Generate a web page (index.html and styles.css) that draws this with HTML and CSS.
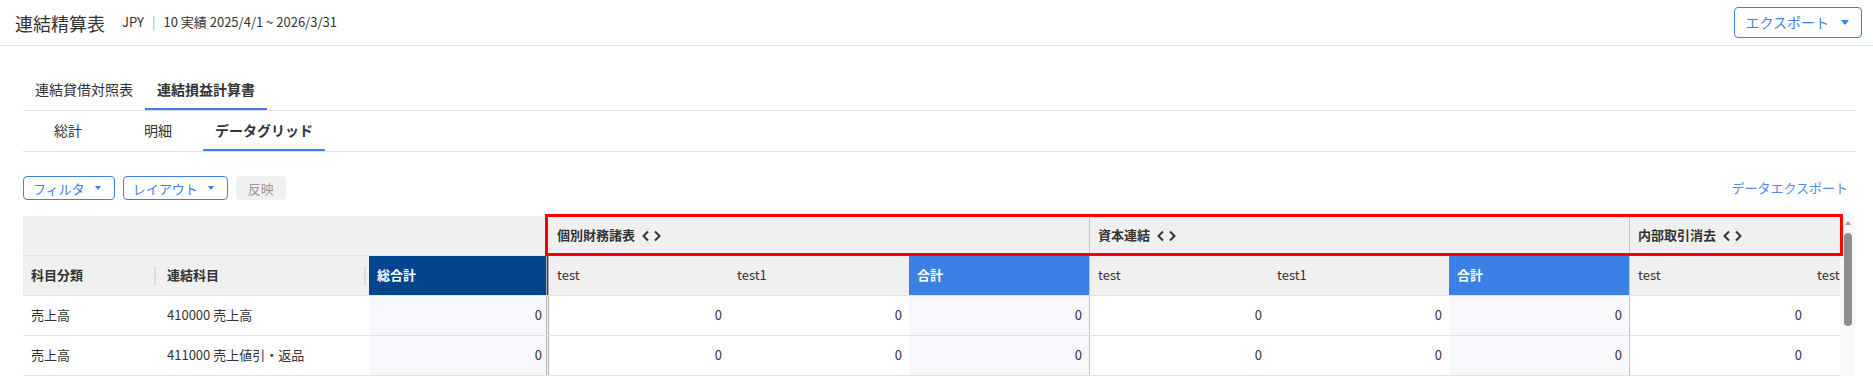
FILE: index.html
```html
<!DOCTYPE html>
<html lang="ja">
<head>
<meta charset="utf-8"/>
<title>連結精算表</title>
<meta name="viewport" content="width=device-width"/>
<link rel="stylesheet" href="styles.css">
</head>
<body>
<header class="page-header">
    <div class="page-title">
        <h1>連結精算表</h1>
        <span class="meta">JPY<span class="sep">|</span>10 実績 2025/4/1 ~ 2026/3/31</span>
    </div>
    <button class="btn btn-export" type="button">エクスポート<i class="caret caret-lg"></i></button>
</header>

<div class="content">
    <!-- statement tabs -->
    <nav class="tabs">
        <a class="tab">連結貸借対照表</a>
        <a class="tab active">連結損益計算書</a>
    </nav>
    <nav class="tabs sub">
        <a class="tab">総計</a>
        <a class="tab">明細</a>
        <a class="tab active">データグリッド</a>
    </nav>

    <div class="toolbar">
        <div class="toolbar-l">
            <button class="btn" type="button">フィルタ<i class="caret"></i></button>
            <button class="btn" type="button">レイアウト<i class="caret"></i></button>
            <button class="btn btn-disabled" type="button">反映</button>
        </div>
        <a class="link-btn">データエクスポート</a>
    </div>

    <!-- data grid -->
    <div class="grid">
        <div class="grid-view">
            <div class="g-row g-head g-group">
                <div class="cell pin-span"></div>
                <div class="cell grp-title span3">個別財務諸表<svg class="arrows" width="22" height="12" viewBox="0 0 22 12"><path d="M7 1.5L2.5 6L7 10.5M14 1.5L18.5 6L14 10.5" fill="none" stroke="#333" stroke-width="2"/></svg></div>
                <div class="cell grp-title span3 grp">資本連結<svg class="arrows" width="22" height="12" viewBox="0 0 22 12"><path d="M7 1.5L2.5 6L7 10.5M14 1.5L18.5 6L14 10.5" fill="none" stroke="#333" stroke-width="2"/></svg></div>
                <div class="cell grp-title span3 grp">内部取引消去<svg class="arrows" width="22" height="12" viewBox="0 0 22 12"><path d="M7 1.5L2.5 6L7 10.5M14 1.5L18.5 6L14 10.5" fill="none" stroke="#333" stroke-width="2"/></svg></div>
            </div>
            <div class="g-row g-head">
                <div class="cell bold resize">科目分類</div>
                <div class="cell bold resize">連結科目</div>
                <div class="cell bold grand pin-end">総合計</div>
                <div class="cell">test</div>
                <div class="cell">test1</div>
                <div class="cell bold sum">合計</div>
                <div class="cell grp">test</div>
                <div class="cell">test1</div>
                <div class="cell bold sum">合計</div>
                <div class="cell grp">test</div>
                <div class="cell">test1</div>
                <div class="cell bold sum">合計</div>
            </div>
            <div class="g-row">
                <div class="cell">売上高</div>
                <div class="cell">410000 売上高</div>
                <div class="cell num total pin-end">0</div>
                <div class="cell num">0</div>
                <div class="cell num">0</div>
                <div class="cell num total">0</div>
                <div class="cell num grp">0</div>
                <div class="cell num">0</div>
                <div class="cell num total">0</div>
                <div class="cell num grp">0</div>
                <div class="cell num">0</div>
                <div class="cell num total">0</div>
            </div>
            <div class="g-row">
                <div class="cell">売上高</div>
                <div class="cell">411000 売上値引・返品</div>
                <div class="cell num total pin-end">0</div>
                <div class="cell num">0</div>
                <div class="cell num">0</div>
                <div class="cell num total">0</div>
                <div class="cell num grp">0</div>
                <div class="cell num">0</div>
                <div class="cell num total">0</div>
                <div class="cell num grp">0</div>
                <div class="cell num">0</div>
                <div class="cell num total">0</div>
            </div>
        </div>
        <div class="grid-scroll"><i class="sb-up"></i><i class="sb-thumb"></i></div>
        <!-- highlight on the group header row -->
        <div class="mark-box"></div>
    </div>
</div>
</body>
</html>
```

FILE: styles.css
```css
/* reset */
html,body,h1,p,div,nav{margin:0;padding:0;}
body{font:13px/1.4 "Noto Sans CJK JP","Noto Sans",sans-serif;color:#333;background:#fff;overflow:hidden;}
a{color:inherit;text-decoration:none;cursor:pointer;}
button{font:inherit;margin:0;cursor:pointer;}

/* header */
.page-header{height:45px;border-bottom:1px solid #e0e0e0;display:flex;align-items:center;justify-content:space-between;padding:0 11px 0 15px;}
.page-title{display:flex;align-items:center;}
.page-title h1{font-size:18px;font-weight:400;line-height:24px;color:#333;}
.page-title .meta{margin-left:17px;font-size:13px;color:#333;}
.page-title .sep{color:#aaa;margin:0 8px;}

/* buttons */
.btn{height:24px;box-sizing:border-box;display:inline-flex;align-items:center;gap:10px;padding:0 13px 0 9px;border:1px solid #3d7fe6;border-radius:4px;background:#fff;color:#3d7fe6;font-size:13px;line-height:1;}
.btn-export{height:31px;font-size:14px;padding:0 12px 0 10px;gap:12px;margin-top:-1px;}
.btn-disabled{border-color:#f0f0f0;background:#f0f0f0;color:#9a9a9a;padding:0 11px;}
.caret{width:0;height:0;border-left:3px solid transparent;border-right:3px solid transparent;border-top:4px solid #3d7fe6;}
.caret-lg{border-left-width:4px;border-right-width:4px;border-top-width:5px;}
.link-btn{color:#5289ea;font-size:13px;padding:0 7px;line-height:24px;}

/* layout */
.content{padding:24px 18px 0 23px;}
.tabs{display:flex;height:40px;border-bottom:1px solid #e0e0e0;}
.tabs .tab{display:flex;align-items:center;justify-content:center;padding:0 12px;font-size:14px;color:#333;box-sizing:border-box;}
.tabs .tab.active{font-weight:700;box-shadow:inset 0 -2px 0 #3d7fe6;}
.tabs.sub .tab{min-width:90px;}
.toolbar{margin-top:24px;height:24px;display:flex;justify-content:space-between;align-items:center;}
.toolbar-l{display:flex;gap:8px;}

/* grid */
.grid{margin-top:16px;display:flex;position:relative;}
.grid-view{flex:1;min-width:0;overflow:hidden;}
.g-row{display:grid;grid-template-columns:136px 210px 180px repeat(9,180px);height:40px;box-sizing:border-box;border-bottom:1px solid #e2e2e2;}
.g-head{background:#f0f0f0;}
.g-group{border-bottom-color:#e4e4e4;}
.cell{display:flex;align-items:center;padding:0 8px;box-sizing:border-box;white-space:nowrap;overflow:hidden;position:relative;}
.cell.bold{font-weight:700;}
.cell.num{justify-content:flex-end;padding-right:7px;}
.cell.pin-span{grid-column:span 3;}
.cell.span3{grid-column:span 3;}
.cell.grp-title{font-weight:700;}
.cell .arrows{margin-left:6px;flex:none;}
.cell.grp{border-left:1px solid #c4c4c4;}
.cell.pin-end{border-right:3px double #b0b0b0;}
.cell.num.pin-end{padding-right:4px;}
.cell.grand{background:#02458f;color:#fff;}
.cell.sum{background:#3b80e6;color:#fff;}
.cell.total{background:#f6f8fc;}
.cell.resize::after{content:"";position:absolute;right:3px;top:10px;width:2px;height:20px;background:#dcdcdc;}

/* scrollbar */
.grid-scroll{flex:none;width:15px;background:#f8f8f8;display:flex;flex-direction:column;align-items:center;}
.sb-up{margin-top:5px;width:0;height:0;border-left:3px solid transparent;border-right:3px solid transparent;border-bottom:4px solid #a0a0a0;}
.sb-thumb{margin-top:8px;width:8px;height:93px;border-radius:4px;background:#8e8e8e;}

/* highlight frame */
.mark-box{position:absolute;left:522px;top:-2px;right:12px;height:42px;border:3px solid #f00;box-sizing:border-box;pointer-events:none;}
```
